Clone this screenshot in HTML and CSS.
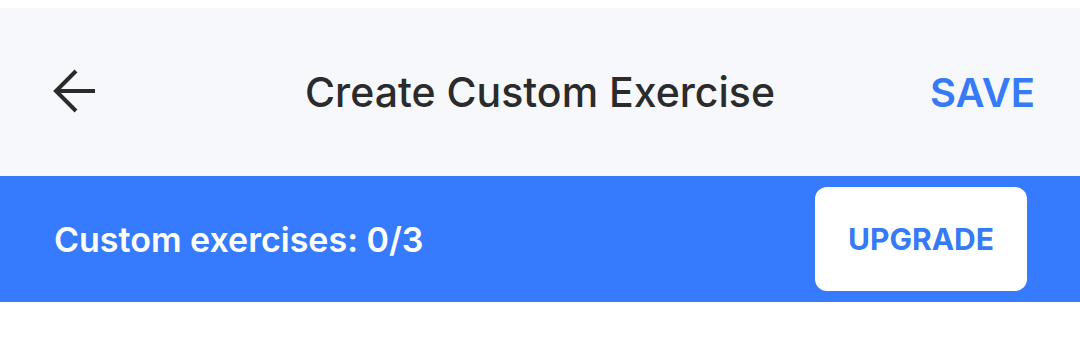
FILE: index.html
```html
<!DOCTYPE html>
<html>
<head>
<meta charset="UTF-8">
<title>Create Custom Exercise</title>
<link rel="stylesheet" href="styles.css">
</head>
<body>

	<div class="header">
		<div class="back">
			<svg width="46" height="46" viewBox="0 0 46 46">
				<path d="M43 23 H5 M24 3 L4 23 L24 43" fill="none" stroke="#2b2b2b" stroke-width="4"/>
			</svg>
		</div>
		<div class="title">Create Custom Exercise</div>
		<div class="save">SAVE</div>
	</div>

	<div class="band">
		<div class="count">Custom exercises: 0/3</div>
		<div class="upgrade">UPGRADE</div>
	</div>

</body>
</html>
```

FILE: styles.css
```css
body{
	margin : 0;
	padding-top : 8px;
	background : #ffffff;
	font-family : Inter, "Noto Sans", sans-serif;
}
.header{
	height : 168px;
	background : #f7f8fb;
	display : grid;
	grid-template-columns : 1fr auto 1fr;
	align-items : center;
	padding : 0 45px;
}
.back{
	width : 46px;
	height : 46px;
	margin : -2px 0 0 7px;
}
.back svg{
	display : block;
}
.title{
	font-size : 41px;
	font-weight : 500;
	color : #2b2b2b;
}
.save{
	justify-self : end;
	font-size : 40px;
	font-weight : 600;
	color : #367bf5;
}
.band{
	height : 126px;
	background : #367bfe;
	display : flex;
	align-items : center;
	justify-content : space-between;
	padding : 0 53px 0 54px;
}
.count{
	font-size : 34px;
	font-weight : 600;
	color : #ffffff;
}
.upgrade{
	width : 212px;
	height : 104px;
	background : #ffffff;
	border-radius : 12px;
	display : flex;
	align-items : center;
	justify-content : center;
	font-size : 30px;
	font-weight : 700;
	color : #367bf5;
}
```
